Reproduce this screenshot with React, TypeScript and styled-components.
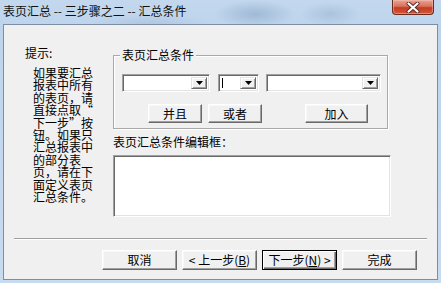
import React from 'react';
import styled, { createGlobalStyle } from 'styled-components';

const GlobalStyle = createGlobalStyle`
  html, body {
    margin: 0;
    padding: 0;
    width: 441px;
    height: 283px;
    overflow: hidden;
  }
  body {
    font-family: "Noto Sans CJK SC", "Noto Sans", sans-serif;
    font-size: 12px;
    color: #000;
  }
`;

const hintLines = [
  '如果要汇总',
  '报表中所有',
  '的表页，请',
  '直接点取“',
  '下一步”按',
  '钮。如果只',
  '汇总报表中',
  '的部分表',
  '页，请在下',
  '面定义表页',
  '汇总条件。',
];

const App = () => {
  return (
    <>
      <GlobalStyle />
      <Window>
        <TitleBar>
          <Title>表页汇总 -- 三步骤之二 -- 汇总条件</Title>
          <CloseButton aria-label="close">
            <svg width="14" height="11" viewBox="0 0 14 11">
              <path d="M2.5 1.5 L11.5 9.5 M11.5 1.5 L2.5 9.5" stroke="#5a2a22" strokeWidth="4" strokeLinecap="round" />
              <path d="M2.5 1.5 L11.5 9.5 M11.5 1.5 L2.5 9.5" stroke="#fff" strokeWidth="2.2" strokeLinecap="round" />
            </svg>
          </CloseButton>
        </TitleBar>
        <Client>
          <Body>
            <Hint>
              <HintLabel>提示:</HintLabel>
              <HintText>
                {hintLines.map((line, i) => (
                  <HintLine key={i}>{line}</HintLine>
                ))}
              </HintText>
            </Hint>
            <Main>
              <GroupBox>
                <Legend>表页汇总条件</Legend>
                <ComboRow>
                  <Combo $w={88} />
                  <Combo $w={41} $caret />
                  <Combo $w={115} />
                </ComboRow>
                <ButtonRow>
                  <GroupButton $w={54} $ml={26}>并且</GroupButton>
                  <GroupButton $w={54} $ml={6}>或者</GroupButton>
                  <GroupButton $w={63} $ml={43}>加入</GroupButton>
                </ButtonRow>
              </GroupBox>
              <EditLabel>表页汇总条件编辑框：</EditLabel>
              <EditBox />
            </Main>
          </Body>
          <Separator />
          <Footer>
            <WizardButton>取消</WizardButton>
            <WizardButton>
              &lt; 上一步(<u>B</u>)
            </WizardButton>
            <WizardButton $default>
              下一步(<u>N</u>) &gt;
            </WizardButton>
            <WizardButton>完成</WizardButton>
          </Footer>
        </Client>
      </Window>
    </>
  );
};

const Combo = ({ $w, $caret }: { $w: number; $caret?: boolean }) => (
  <ComboBox $w={$w}>
    {$caret && <Caret />}
    <DropButton>
      <svg width="7" height="4" viewBox="0 0 7 4">
        <path d="M0 0 H7 L3.5 4 Z" fill="#000" />
      </svg>
    </DropButton>
  </ComboBox>
);

const Window = styled.div`
  width: 441px;
  height: 283px;
  display: flex;
  flex-direction: column;
  background:
    radial-gradient(ellipse 40px 14px at 255px 14px, rgba(120, 150, 185, 0.45), transparent),
    radial-gradient(ellipse 30px 12px at 330px 14px, rgba(130, 160, 190, 0.35), transparent),
    radial-gradient(ellipse 60px 10px at 150px 24px, rgba(140, 165, 195, 0.3), transparent),
    linear-gradient(180deg, #c3d8ee 0%, #bdd4ec 10%, #c8dcf0 100%);
`;

const TitleBar = styled.div`
  height: 24px;
  display: flex;
  align-items: flex-start;
  justify-content: space-between;
  padding: 0 7px 0 3px;
  box-sizing: border-box;
`;

const Title = styled.div`
  margin-top: 4px;
  font-size: 12px;
  line-height: 14px;
  color: #111;
  white-space: nowrap;
`;

const CloseButton = styled.div`
  width: 42px;
  height: 15px;
  box-sizing: border-box;
  display: flex;
  align-items: center;
  justify-content: center;
  border: 1px solid #6b2a1e;
  border-top: none;
  border-radius: 0 0 4px 4px;
  background: linear-gradient(180deg, #e7a597 0%, #d9705a 45%, #c43b22 55%, #d2583a 100%);
  box-shadow: inset 0 0 0 1px rgba(255, 200, 190, 0.45);
`;

const Client = styled.div`
  height: 256px;
  margin: 0 3px 3px 3px;
  box-sizing: border-box;
  border: 1px solid #7d8ea3;
  background: #f0f0f0;
  display: flex;
  flex-direction: column;
`;

const Body = styled.div`
  display: flex;
  padding: 21px 0 0 21px;
  height: 192px;
  box-sizing: border-box;
`;

const Hint = styled.div`
  width: 88px;
  flex-shrink: 0;
`;

const HintLabel = styled.div`
  line-height: 14px;
`;

const HintText = styled.div`
  margin: 7px 0 0 8px;
`;

const HintLine = styled.div`
  line-height: 12.4px;
  white-space: nowrap;
`;

const Main = styled.div`
  display: flex;
  flex-direction: column;
  width: 278px;
`;

const GroupBox = styled.div`
  position: relative;
  margin-top: 9px;
  width: 275px;
  box-sizing: border-box;
  border: 1px solid #a9a9a9;
  box-shadow: inset 1px 1px 0 #fff, 1px 1px 0 #fff;
  padding: 18px 0 5px 8px;
  display: flex;
  flex-direction: column;
  gap: 12px;
`;

const Legend = styled.div`
  position: absolute;
  left: 6px;
  top: -8px;
  padding: 0 2px;
  line-height: 14px;
  background: #f0f0f0;
`;

const ComboRow = styled.div`
  display: flex;
  gap: 8px;
  & > :last-child {
    margin-left: -1px;
  }
`;

const ComboBox = styled.div<{ $w: number }>`
  position: relative;
  width: ${(p) => p.$w}px;
  height: 18px;
  box-sizing: border-box;
  background: #fff;
  border: 1px solid;
  border-color: #a0a0a0 #fff #fff #a0a0a0;
  box-shadow: inset 1px 1px 0 #696969, inset -1px -1px 0 #e3e3e3;
  display: flex;
  justify-content: flex-end;
  align-items: stretch;
  padding: 2px;
`;

const Caret = styled.div`
  position: absolute;
  left: 3px;
  top: 3px;
  width: 1px;
  height: 10px;
  background: #000;
`;

const DropButton = styled.div`
  width: 16px;
  box-sizing: border-box;
  background: #f0f0f0;
  border: 1px solid;
  border-color: #e3e3e3 #696969 #696969 #e3e3e3;
  box-shadow: inset 1px 1px 0 #fff, inset -1px -1px 0 #a0a0a0;
  display: flex;
  align-items: center;
  justify-content: center;
`;

const ButtonRow = styled.div`
  display: flex;
`;

const RaisedButton = styled.div`
  box-sizing: border-box;
  background: #f0f0f0;
  border: 1px solid;
  border-color: #fff #696969 #696969 #fff;
  box-shadow: inset -1px -1px 0 #a0a0a0, inset 1px 1px 0 #f7f7f7;
  display: flex;
  align-items: center;
  justify-content: center;
  line-height: 14px;
  white-space: nowrap;
`;

const GroupButton = styled(RaisedButton)<{ $w: number; $ml: number }>`
  width: ${(p) => p.$w}px;
  height: 19px;
  margin-left: ${(p) => p.$ml}px;
`;

const EditLabel = styled.div`
  margin-top: 6px;
  line-height: 14px;
`;

const EditBox = styled.div`
  margin-top: 6px;
  width: 278px;
  height: 62px;
  box-sizing: border-box;
  background: #fff;
  border: 1px solid;
  border-color: #a0a0a0 #fff #fff #a0a0a0;
  box-shadow: inset 1px 1px 0 #696969, inset -1px -1px 0 #e3e3e3;
`;

const Separator = styled.div`
  margin: 21px 10px 0 10px;
  height: 1px;
  background: #a0a0a0;
  border-bottom: 1px solid #fff;
`;

const Footer = styled.div`
  display: flex;
  gap: 5px;
  padding-left: 98px;
  margin-top: 10px;
`;

const WizardButton = styled(RaisedButton)<{ $default?: boolean }>`
  width: 75px;
  height: 20px;
  ${(p) =>
    p.$default &&
    `
    border: 1px solid #000;
    box-shadow: inset 1px 1px 0 #fff, inset -1px -1px 0 #696969, inset -2px -2px 0 #a0a0a0;
  `}
`;

export default App;
